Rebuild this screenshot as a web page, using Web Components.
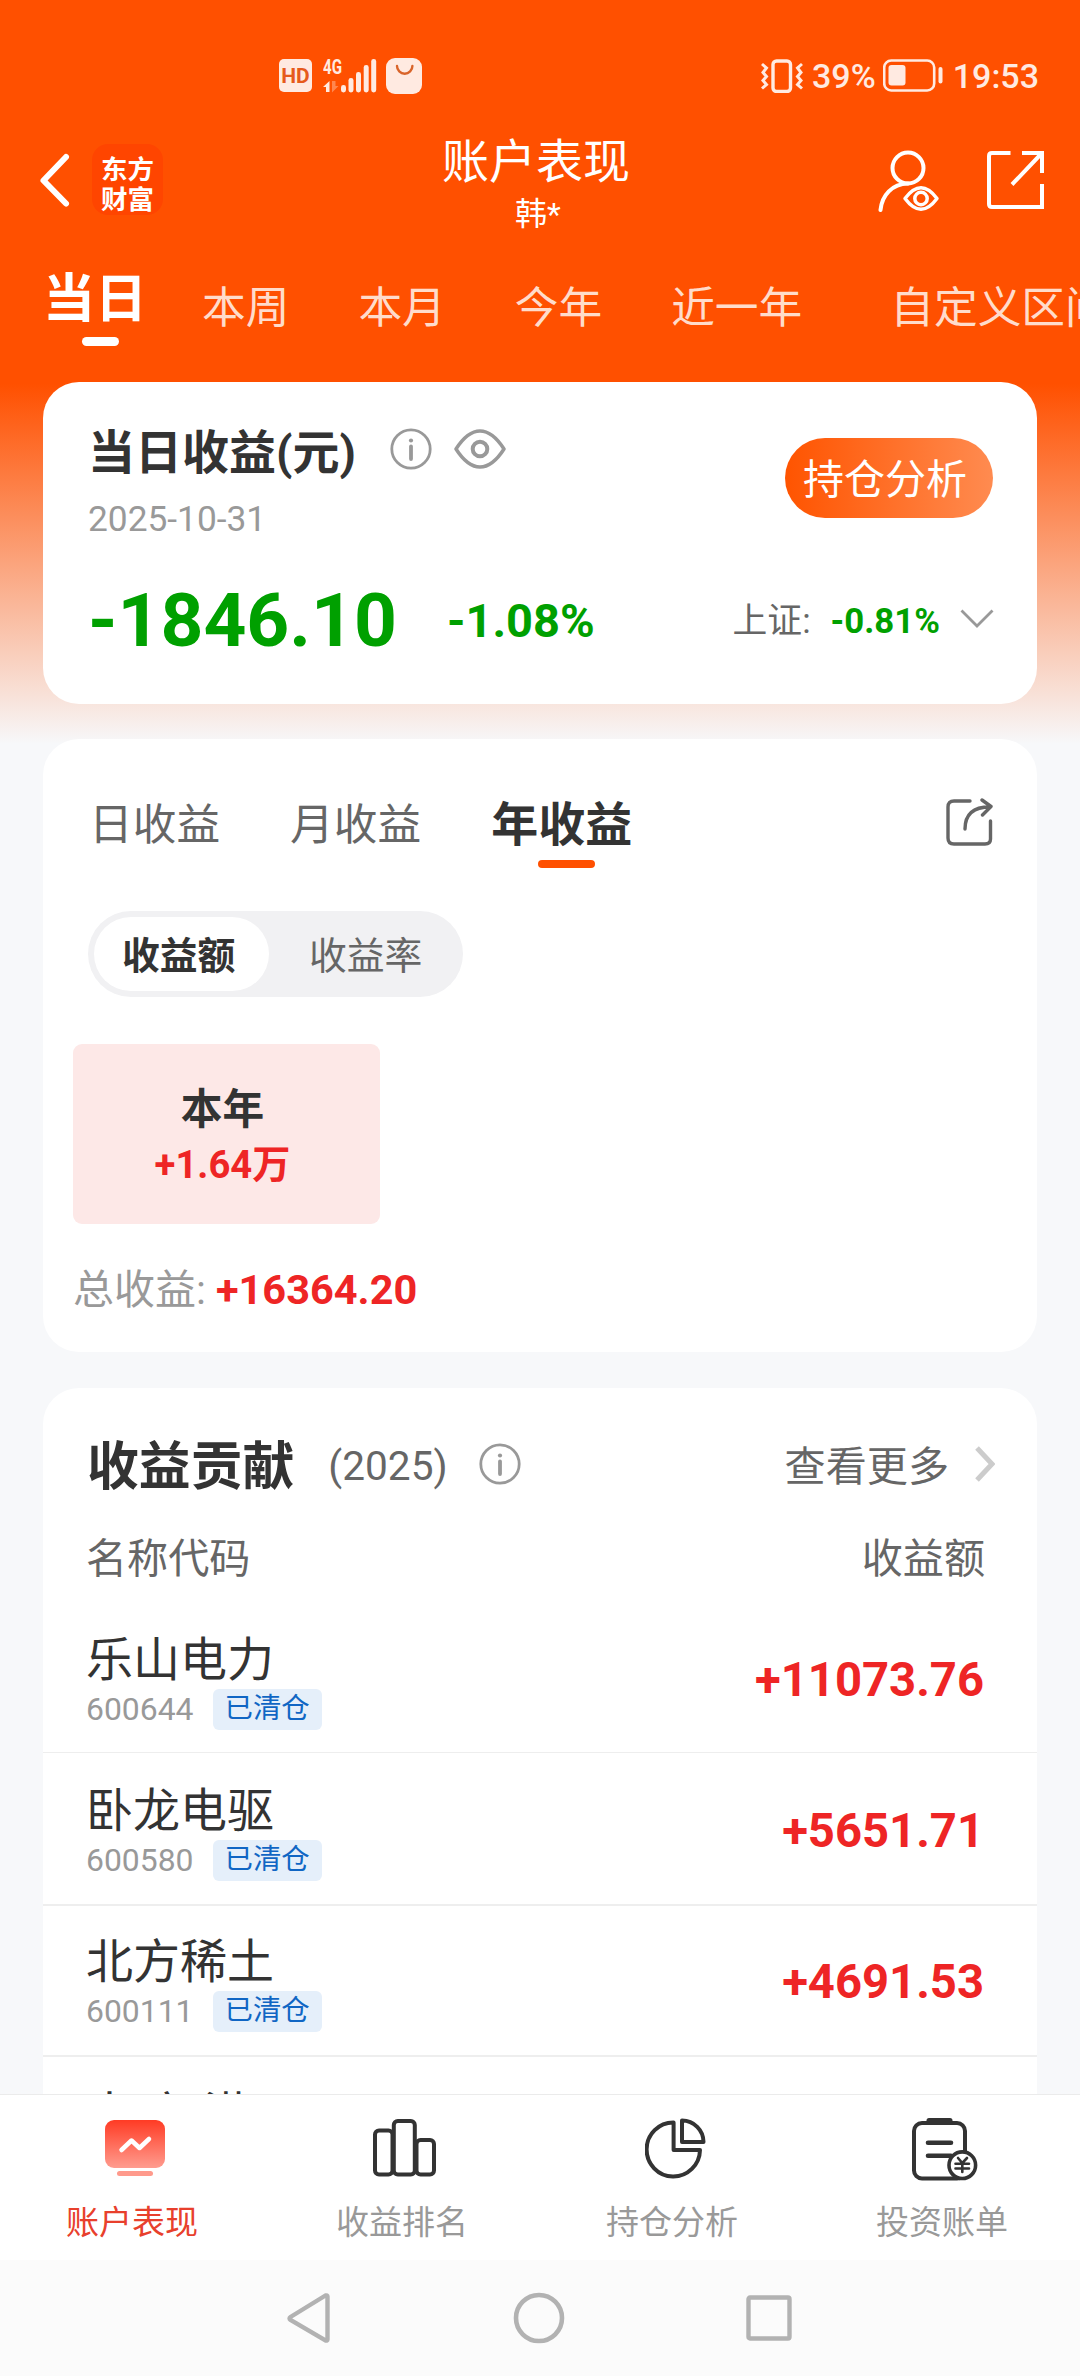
<!DOCTYPE html>
<html lang="zh-CN">
<head>
<meta charset="utf-8">
<meta name="viewport" content="width=device-width">
<title>账户表现</title>
<style>
    body {
        margin: 0;
        font-family: Roboto, "Noto Sans CJK SC", sans-serif;
        color: #333;
    }
</style>
</head>
<body>
<account-app></account-app>

<script>
/**
 * Creates a template element from markup.
 *
 * @param {string} html - The markup.
 * @returns {HTMLTemplateElement} The template.
 */
function createTemplate (html) {
  const template = document.createElement('template')
  template.innerHTML = html
  return template
}

/**
 * Base class that attaches a shadow root cloned from the class' template.
 */
class BaseElement extends HTMLElement {
  /**
   * Creates an instance of the current type.
   */
  constructor () {
    super()

    this.attachShadow({ mode: 'open' }).appendChild(this.constructor.template.content.cloneNode(true))
  }
}

// The drawings, each as [width, height, markup].
const icons = {
  network: [54, 37, `
    <g fill="currentColor">
      <text x="0" y="17" font-family="Roboto" font-weight="700" font-size="21" textLength="19" lengthAdjust="spacingAndGlyphs">4G</text>
      <path d="M0 30 6.5 24V35H3V30Z"/><path d="M9 24h3.5v5H15.5L9 35.5Z" opacity=".35"/>
      <rect x="18" y="28" width="5" height="7.5" rx="2.4"/><rect x="25.5" y="21" width="5" height="14.5" rx="2.4"/>
      <rect x="33" y="15" width="5" height="20.5" rx="2.4"/><rect x="40.7" y="8" width="5" height="27.5" rx="2.4"/>
      <rect x="48.2" y="2" width="5" height="33.5" rx="2.4"/>
    </g>`],
  bag: [36, 36, '<rect width="36" height="36" rx="9" fill="currentColor"/><path d="M11 8a7.7 7.7 0 0 0 15.4 0" fill="none" stroke="#d9642a" stroke-width="2.4" stroke-linecap="round"/>'],
  vibrate: [42, 34, `
    <g fill="none" stroke="currentColor" stroke-width="3">
      <rect x="12" y="2" width="17.5" height="30.5" rx="3.5" stroke-width="3.4"/>
      <path d="M1 5 5.5 9 2 13.5 5.5 17.5 2 21.5 5.5 25.5 1 29.5M41 5 36.5 9 40 13.5 36.5 17.5 40 21.5 36.5 25.5 41 29.5"/>
    </g>`],
  battery: [60, 33, `
    <rect x="1.2" y="1.5" width="50" height="30" rx="7" fill="none" stroke="currentColor" stroke-width="2.6"/>
    <rect x="5.5" y="6" width="17" height="20.5" rx="3" fill="currentColor"/><rect x="55.5" y="8" width="4" height="16.5" rx="2" fill="currentColor"/>`],
  back: [32, 56, '<path d="M27 5 4.5 28.5 27 51.5" fill="none" stroke="currentColor" stroke-width="6" stroke-linecap="round" stroke-linejoin="round"/>'],
  user: [62, 62, `
    <g fill="none" stroke="currentColor" stroke-width="4" stroke-linecap="round">
      <circle cx="30" cy="18" r="15.5"/><path d="M2.5 60C4 45 14 34 30 33.5"/>
      <path d="M27 48.5Q43 27 59 48.5Q43 70 27 48.5Z" stroke-width="3.5" stroke-linejoin="round"/>
      <circle cx="43" cy="48.5" r="6.2" stroke-width="3.5"/>
    </g>`],
  open: [57, 58, '<path d="M23.5 2H5Q2 2 2 5V53Q2 56 5 56H55V33M35 2H55V22M54.5 2.5 25 33.5" fill="none" stroke="currentColor" stroke-width="4"/>'],
  info: [42, 42, `
    <circle cx="21" cy="21" r="19.2" fill="none" stroke="#999" stroke-width="2.8"/>
    <circle cx="21" cy="12.5" r="2.1" fill="#999"/><path d="M21 18.5V31" stroke="#999" stroke-width="3.8" stroke-linecap="round"/>`],
  eye: [52, 40, '<g fill="none" stroke="#999"><path d="M2 20C10 7.5 18 2 26 2S42 7.5 50 20C42 32.5 34 38 26 38S10 32.5 2 20Z" stroke-width="3.5" stroke-linejoin="round"/><circle cx="26" cy="20" r="7.3" stroke-width="4"/></g>'],
  down: [34, 20, '<path d="M1.5 1.5 17 17 32.5 1.5" fill="none" stroke="#999" stroke-width="2.8"/>'],
  more: [20, 36, '<path d="M2 2 17 18 2 34" fill="none" stroke="#ccc" stroke-width="5"/>'],
  share: [47, 48, `
    <g fill="none" stroke="#666" stroke-width="3.4" stroke-linecap="round" stroke-linejoin="round">
      <path d="M24 3H8Q2 3 2 9V40Q2 46 8 46H39Q44.5 46 44.5 41V23"/>
      <path d="M19 31C19 17 27 9 44 8.8M36 2 45 8.5 36.5 17"/>
    </g>`],
  performance: [62, 58, `
    <defs><linearGradient id="g" x2="0" y2="1"><stop stop-color="#ff3b24"/><stop offset="1" stop-color="#ff9c8f"/></linearGradient></defs>
    <rect x="1" y="2" width="60" height="48" rx="9" fill="url(#g)"/><rect x="13" y="53" width="36" height="5" rx="2.5" fill="#ff9a8c"/>
    <path d="M17.5 32 27.5 22.5 35.5 30 45 21" fill="none" stroke="#fff" stroke-width="4.5" stroke-linecap="round" stroke-linejoin="round"/>`],
  ranking: [64, 60, `
    <g fill="none" stroke="#333" stroke-width="4">
      <rect x="2" y="12.5" width="17.5" height="44" rx="4"/><rect x="20.8" y="3" width="21" height="53.5" rx="4"/><rect x="43.5" y="22" width="17.5" height="34.5" rx="4"/>
    </g>`],
  pie: [61, 62, `
    <g fill="none" stroke="#333" stroke-width="4" stroke-linejoin="round">
      <path d="M28.6 4.5V32H55A26.7 27 0 1 1 28.6 4.5Z"/><path d="M37 2.5A21.5 21.5 0 0 1 58.5 24H37Z"/>
    </g>`],
  bill: [66, 63, `
    <g fill="none" stroke="#333" stroke-width="4" stroke-linecap="round">
      <rect x="2" y="5" width="51" height="55.5" rx="8"/><path d="M17 2.5H38" stroke-width="5"/><path d="M16 24.7H39M16 37.7H39" stroke-width="4.6"/>
      <circle cx="50.3" cy="47.2" r="13.3" fill="#fff" stroke-width="3.6"/>
      <path d="M46 40 50.3 45 55 40M43.5 45.7H57M43.5 50.5H57M50.3 45V54" stroke-width="2.6"/>
    </g>`],
  navBack: [44, 52, '<path d="M40.5 4.5V47.5Q40.5 49 38.5 48.5L3.5 28Q1.5 26.5 3.5 25L38.5 3.5Q40.5 3 40.5 4.5Z" fill="none" stroke="currentColor" stroke-width="4.4"/>'],
  navHome: [52, 52, '<circle cx="26" cy="26" r="23" fill="none" stroke="currentColor" stroke-width="4.6"/>'],
  navRecent: [46, 46, '<rect x="2.5" y="2.5" width="41" height="41" rx="1.5" fill="none" stroke="currentColor" stroke-width="4.4"/>']
}

customElements.define('app-icon',
  /**
   * Represents an icon, chosen by the name attribute.
   */
  class extends BaseElement {
    static template = createTemplate('<style>:host { display: block; flex: none } svg { display: block }</style>')

    /**
     * Called after the element is inserted into the DOM.
     */
    connectedCallback () {
      const [width, height, markup] = icons[this.getAttribute('name')]
      this.shadowRoot.querySelector('svg')?.remove()
      this.shadowRoot.appendChild(createTemplate(
        `<svg width="${width}" height="${height}" viewBox="0 0 ${width} ${height}">${markup}</svg>`
      ).content)
    }
  }
)

customElements.define('status-bar',
  /**
   * Represents the status bar of the phone.
   */
  class extends BaseElement {
    static template = createTemplate(`
    <style>
        :host {
            display: flex;
            flex: none;
            align-items: center;
            height: 51px;
            padding: 50px 41px 0 279px;
            color: #ffeae1;
            font-size: 34px;
            font-weight: 500;
        }

        .hd {
            width: 33px;
            height: 33px;
            line-height: 34px;
            border-radius: 5px;
            background-color: #ffeae1;
            color: #e65a1c;
            font-size: 21px;
            font-weight: 700;
            text-align: center;
            margin-right: 11px;
        }

        .bag {
            margin: 0 auto 0 9px;
        }

        .battery {
            margin: 0 10px 0 7px;
        }

        .vibrate {
            margin-right: 9px;
        }
    </style>
    <div class="hd">HD</div>
    <app-icon name="network"></app-icon>
    <app-icon class="bag" name="bag"></app-icon>
    <app-icon class="vibrate" name="vibrate"></app-icon>
    <span>39%</span>
    <app-icon class="battery" name="battery"></app-icon>
    <span>19:53</span>
    `)
  }
)

customElements.define('app-header',
  /**
   * Represents the header with the logo, the title and its actions.
   */
  class extends BaseElement {
    static template = createTemplate(`
    <style>
        :host {
            display: grid;
            flex: none;
            grid-template-columns: 1fr auto 1fr;
            height: 139px;
            padding: 0 36px 0 39px;
            color: #fff;
        }

        .left, .right {
            display: flex;
            align-items: flex-start;
        }

        .left {
            padding-top: 43px;
        }

        .left app-icon {
            margin: 8px 21px 0 0;
        }

        .right {
            justify-content: flex-end;
            gap: 47px;
            padding-top: 49px;
        }

        .right app-icon + app-icon {
            margin-top: 1px;
        }

        .logo {
            width: 71px;
            height: 60px;
            padding-top: 11px;
            border-radius: 16px;
            background-color: #ff4500;
            font-size: 26.5px;
            font-weight: 700;
            line-height: 29.5px;
            text-align: center;
        }

        .title {
            padding-top: 33px;
            margin-right: 11px;
            text-align: center;
            font-size: 47px;
            line-height: 56px;
        }

        .name {
            font-size: 32px;
            line-height: 48px;
            margin-left: 4px;
        }
    </style>
    <div class="left">
        <app-icon name="back"></app-icon>
        <div class="logo">东方<br>财富</div>
    </div>
    <div class="title">
        <slot></slot>
        <div class="name"><slot name="user"></slot></div>
    </div>
    <div class="right">
        <app-icon name="user"></app-icon>
        <app-icon name="open"></app-icon>
    </div>
    `)
  }
)

customElements.define('range-tabs',
  /**
   * Represents the row of time ranges, which runs out of the screen.
   */
  class extends BaseElement {
    static template = createTemplate(`
    <style>
        :host {
            display: flex;
            flex: none;
            height: 142px;
            padding-left: 43px;
            overflow: hidden;
            white-space: nowrap;
            color: #ffdccb;
            font-size: 43.7px;
            line-height: 60px;
        }

        ::slotted(span) {
            margin: 38px 69px 0 0;
        }

        ::slotted(span[slot]) {
            margin: 0;
        }

        .active {
            width: 104px;
            margin: 30px 55px 0 0;
            color: #fff;
            font-size: 52px;
            font-weight: 700;
        }

        .active::after {
            content: "";
            display: block;
            width: 37px;
            height: 9px;
            margin: 7px 0 0 39px;
            border-radius: 5px;
            background-color: #fff;
        }
    </style>
    <div class="active"><slot name="active"></slot></div>
    <slot></slot>
    `)
  }
)

customElements.define('app-card',
  /**
   * Represents a white card with round corners.
   */
  class extends BaseElement {
    static template = createTemplate(`
    <style>
        :host {
            display: block;
            flex: none;
            box-sizing: border-box;
            margin: 0 43px;
            border-radius: 36px;
            background-color: #fff;
        }
    </style>
    <slot></slot>
    `)
  }
)

customElements.define('daily-summary',
  /**
   * Represents the result of the day.
   */
  class extends BaseElement {
    static template = createTemplate(`
    <style>
        :host {
            display: block;
            height: 281px;
            padding: 41px 44px 0 45px;
        }

        .top, .title, .bottom, .index {
            display: flex;
            align-items: center;
        }

        .top {
            justify-content: space-between;
            align-items: flex-start;
        }

        .title {
            height: 60px;
            line-height: 60px;
            font-size: 47px;
            font-weight: 700;
        }

        .title span {
            min-width: 302px;
        }

        .title app-icon {
            margin: -8px 22px 0 0;
        }

        .date {
            margin-top: 14px;
            color: #999;
            font-size: 35.3px;
            line-height: 44px;
        }

        .pill {
            width: 190px;
            height: 80px;
            margin-top: 15px;
            padding-left: 18px;
            border-radius: 40px;
            background-image: linear-gradient(90deg, #ff5400, #ff8b50);
            color: #fff;
            font-size: 41px;
            line-height: 85px;
        }

        .bottom {
            height: 100px;
            margin-top: 30px;
            color: #00a000;
            font-weight: 700;
            line-height: 100px;
        }

        .amount {
            min-width: 359px;
            font-size: 74.88px;
        }

        .rate {
            font-size: 47px;
        }

        .index {
            margin-left: auto;
            font-size: 34.8px;
        }

        .index span {
            margin-right: 20px;
            color: #666;
            font-weight: 400;
        }

        .index app-icon {
            margin: -5px -1px 0 20px;
        }
    </style>
    <div class="top">
        <div>
            <div class="title">
                <span>当日收益(元)</span>
                <app-icon name="info"></app-icon>
                <app-icon name="eye"></app-icon>
            </div>
            <div class="date">2025-10-31</div>
        </div>
        <div class="pill">持仓分析</div>
    </div>
    <div class="bottom">
        <div class="amount">-1846.10</div>
        <div class="rate">-1.08%</div>
        <div class="index"><span>上证:</span>-0.81%<app-icon name="down"></app-icon></div>
    </div>
    `)
  }
)

customElements.define('profit-calendar',
  /**
   * Represents the profit per day, month or year.
   */
  class extends BaseElement {
    static template = createTemplate(`
    <style>
        :host {
            display: block;
            height: 557px;
            padding: 56px 44px 0 30px;
        }

        .tabs {
            display: flex;
            height: 73px;
            padding-left: 16px;
            color: #666;
            font-size: 43.7px;
            line-height: 60px;
        }

        .tabs div {
            margin-right: 70px;
        }

        .tabs .active {
            margin: 0;
            color: #333;
            font-size: 47px;
            font-weight: 700;
        }

        .active::after {
            content: "";
            display: block;
            width: 57px;
            height: 8px;
            margin: 5px 0 0 47px;
            border-radius: 4px;
            background-color: #ff5000;
        }

        .tabs app-icon {
            margin: 3px 0 0 auto;
        }

        .toggle {
            display: flex;
            box-sizing: border-box;
            width: 375px;
            height: 86px;
            margin: 43px 0 47px 15px;
            padding: 6px;
            border-radius: 43px;
            background-color: #f1f1f3;
            color: #666;
            font-size: 37.8px;
            line-height: 78px;
        }

        .toggle div {
            padding-left: 40px;
        }

        .toggle .on {
            width: 147px;
            height: 74px;
            padding-left: 28px;
            border-radius: 37px;
            background-color: #fff;
            color: #333;
            font-weight: 700;
        }

        .year {
            box-sizing: border-box;
            width: 307px;
            height: 180px;
            padding: 39px 8px 0 0;
            border-radius: 9px;
            background-color: #fde8e7;
            font-size: 41.7px;
            font-weight: 700;
            line-height: 54px;
            text-align: center;
        }

        .year div, b {
            color: #ee2525;
            font-size: 38.2px;
            line-height: 56px;
        }

        .total {
            display: flex;
            gap: 10px;
            height: 60px;
            margin-top: 36px;
            color: #999;
            font-size: 41px;
            line-height: 60px;
        }

        .total b {
            font-size: 41.5px;
            line-height: 60px;
        }
    </style>
    <div class="tabs">
        <div>日收益</div>
        <div>月收益</div>
        <div class="active">年收益</div>
        <app-icon name="share"></app-icon>
    </div>
    <div class="toggle">
        <div class="on">收益额</div>
        <div>收益率</div>
    </div>
    <div class="year">本年<div>+1.64万</div></div>
    <div class="total">总收益: <b>+16364.20</b></div>
    `)
  }
)

customElements.define('stock-row',
  /**
   * Represents a stock with its code and its profit.
   */
  class extends BaseElement {
    static template = createTemplate(`
    <style>
        :host {
            display: flex;
            justify-content: space-between;
            box-sizing: border-box;
            height: 151px;
            padding: 34px 53px 0 43px;
        }

        .name {
            font-size: 47px;
            line-height: 50px;
        }

        .code {
            display: flex;
            align-items: center;
            height: 41px;
            margin-top: 4px;
            color: #999;
            font-size: 31.9px;
            line-height: 45px;
        }

        .tag {
            display: none;
            width: 97px;
            height: 41px;
            padding-left: 12px;
            margin: -1px 0 0 19px;
            border-radius: 6px;
            background-color: #e5effa;
            color: #1066c4;
            font-size: 28.4px;
            line-height: 40px;
        }

        :host([closed]) .tag {
            display: block;
        }

        .value {
            color: #ee2525;
            font-size: 47.2px;
            font-weight: 700;
            line-height: 90px;
        }
    </style>
    <div>
        <div class="name"><slot></slot></div>
        <div class="code"><slot name="code"></slot><div class="tag">已清仓</div></div>
    </div>
    <div class="value"><slot name="value"></slot></div>
    `)
  }
)

customElements.define('profit-list',
  /**
   * Represents the list of stocks that contributed to the profit.
   */
  class extends BaseElement {
    static template = createTemplate(`
    <style>
        :host {
            display: block;
            padding-top: 44px;
        }

        .head, .columns {
            display: flex;
            align-items: center;
            color: #666;
            font-size: 41.1px;
            line-height: 54px;
        }

        .head {
            height: 70px;
            padding: 0 42px 0 44px;
        }

        h2 {
            margin: 1px 34px 0 0;
            color: #333;
            font-size: 51.84px;
        }

        .year {
            margin-top: -2px;
            font-size: 40.6px;
        }

        .head app-icon {
            margin: -6px 0 0 31px;
        }

        .more {
            margin-left: auto;
        }

        .head .arrow {
            margin-left: 26px;
        }

        .columns {
            justify-content: space-between;
            height: 54px;
            margin: 30px 52px 15px 43px;
        }

        ::slotted(stock-row:nth-of-type(n + 2)) {
            border-top: 2px solid #eee;
            padding-top: 31px;
        }

        ::slotted(stock-row:nth-of-type(2)) {
            height: 152px;
            border-top-width: 1px;
            padding-top: 33px;
        }

        ::slotted(stock-row:nth-of-type(4)) {
            padding-top: 33px;
        }
    </style>
    <div class="head">
        <h2>收益贡献</h2>
        <span class="year">(2025)</span>
        <app-icon name="info"></app-icon>
        <span class="more">查看更多</span>
        <app-icon class="arrow" name="more"></app-icon>
    </div>
    <div class="columns"><span>名称代码</span><span>收益额</span></div>
    <slot></slot>
    `)
  }
)

customElements.define('tab-item',
  /**
   * Represents an item of the tab bar.
   */
  class extends BaseElement {
    static template = createTemplate(`
    <style>
        :host {
            display: flex;
            flex: 1;
            flex-direction: column;
            align-items: center;
            color: #999;
        }

        :host([active]) {
            color: #e8402c;
        }

        .icon {
            display: flex;
            height: 80px;
            padding-top: 23px;
        }

        .label {
            padding-right: 6px;
            font-size: 33px;
            line-height: 50px;
        }
    </style>
    <div class="icon"><slot name="icon"></slot></div>
    <div class="label"><slot></slot></div>
    `)
  }
)

customElements.define('tab-bar',
  /**
   * Represents the tab bar of the app.
   */
  class extends BaseElement {
    static template = createTemplate(`
    <style>
        :host {
            display: flex;
            box-sizing: border-box;
            height: 166px;
            border-top: 1px solid #ebebeb;
            background-color: #fff;
        }
    </style>
    <slot></slot>
    `)
  }
)

customElements.define('system-nav',
  /**
   * Represents the navigation buttons of the phone.
   */
  class extends BaseElement {
    static template = createTemplate(`
    <style>
        :host {
            display: flex;
            align-items: center;
            justify-content: space-between;
            height: 116px;
            padding: 0 288px 0 287px;
            background-color: #fbfbfb;
            color: #b2b2b2;
        }
    </style>
    <app-icon name="navBack"></app-icon>
    <app-icon name="navHome"></app-icon>
    <app-icon name="navRecent"></app-icon>
    `)
  }
)

customElements.define('account-app',
  /**
   * Represents the whole screen.
   */
  class extends BaseElement {
    static template = createTemplate(`
    <style>
        :host {
            display: flex;
            flex-direction: column;
            width: 1080px;
            height: 2376px;
            overflow: hidden;
        }

        main {
            display: flex;
            flex-direction: column;
            height: 2094px;
            overflow: hidden;
            background: linear-gradient(#ff5000 384px, #f7f8fa 744px);
        }

        .second {
            height: 613px;
            margin-top: 35px;
        }

        .third {
            margin-top: 36px;
            border-radius: 36px 36px 0 0;
        }
    </style>
    <main>
        <status-bar></status-bar>
        <app-header>账户表现<span slot="user">韩*</span></app-header>
        <range-tabs>
            <span slot="active">当日</span>
            <span>本周</span>
            <span>本月</span>
            <span>今年</span>
            <span style="margin-right: 88px">近一年</span>
            <span>自定义区间</span>
        </range-tabs>
        <app-card><daily-summary></daily-summary></app-card>
        <app-card class="second"><profit-calendar></profit-calendar></app-card>
        <app-card class="third">
            <profit-list>
                <stock-row closed>乐山电力<span slot="code">600644</span><span slot="value">+11073.76</span></stock-row>
                <stock-row closed>卧龙电驱<span slot="code">600580</span><span slot="value">+5651.71</span></stock-row>
                <stock-row closed>北方稀土<span slot="code">600111</span><span slot="value">+4691.53</span></stock-row>
                <stock-row>南 京 港</stock-row>
            </profit-list>
        </app-card>
    </main>
    <tab-bar>
        <tab-item active><app-icon slot="icon" name="performance"></app-icon>账户表现</tab-item>
        <tab-item><app-icon slot="icon" name="ranking"></app-icon>收益排名</tab-item>
        <tab-item><app-icon slot="icon" name="pie"></app-icon>持仓分析</tab-item>
        <tab-item><app-icon slot="icon" name="bill"></app-icon>投资账单</tab-item>
    </tab-bar>
    <system-nav></system-nav>
    `)
  }
)
</script>
</body>
</html>
